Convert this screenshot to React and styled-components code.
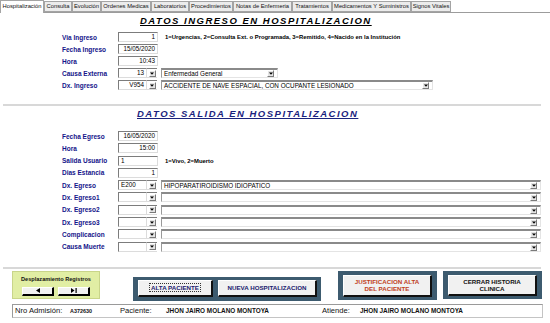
import React from "react";
import styled, { createGlobalStyle } from "styled-components";

const GlobalStyle = createGlobalStyle`
  html, body { margin: 0; padding: 0; background: #fff; }
  body { font-family: "Liberation Sans", Arial, sans-serif; }
`;

const Page = styled.div`
  width: 550px;
  height: 323px;
  overflow: hidden;
  display: flex;
  flex-direction: column;
  background: #fff;
`;

const TabBar = styled.div`
  display: flex;
  align-items: flex-end;
  height: 13px;
  box-sizing: border-box;
  border-bottom: 1px solid #9c9c9c;
`;

const Tab = styled.div`
  flex: none;
  width: ${(p) => p.$w}px;
  height: ${(p) => (p.$active ? 13 : 11)}px;
  margin-bottom: ${(p) => (p.$active ? -1 : 0)}px;
  box-sizing: border-box;
  border: 1px solid #a4a4a4;
  border-bottom: ${(p) => (p.$active ? "none" : "1px solid #a4a4a4")};
  background: ${(p) => (p.$active ? "#fff" : "#ececec")};
  font-size: 5.8px;
  line-height: ${(p) => (p.$active ? 11 : 9)}px;
  text-align: center;
  white-space: nowrap;
  overflow: hidden;
  color: #111;
`;

const Title = styled.div`
  margin-top: 2px;
  padding-left: ${(p) => p.$left}px;
  height: 12px;
  font-size: 9.5px;
  line-height: 12px;
  font-weight: bold;
  font-style: italic;
  letter-spacing: ${(p) => p.$ls}px;
  color: ${(p) => p.$color};
  white-space: nowrap;
  span { text-decoration: underline; text-decoration-thickness: 1.3px; }
`;

const Form = styled.div`
  display: flex;
  flex-direction: column;
  gap: ${(p) => p.$gap}px;
  margin-top: ${(p) => p.$mt}px;
  padding-left: 62px;
`;

const Row = styled.div`
  display: flex;
  align-items: center;
  height: 10px;
`;

const Label = styled.div`
  flex: none;
  width: 56px;
  font-size: 6.5px;
  font-weight: bold;
  color: #14148a;
  white-space: nowrap;
`;

const TextBox = styled.div`
  flex: none;
  width: ${(p) => p.$w}px;
  height: 10px;
  box-sizing: border-box;
  border-top: 1px solid #7c7c7c;
  border-left: 1px solid #7c7c7c;
  border-right: 1px solid #dcdcdc;
  border-bottom: 1px solid #dcdcdc;
  background: #fff;
  padding: 0 2px;
  font-size: 6.3px;
  line-height: 8px;
  text-align: ${(p) => p.$align || "right"};
  color: #000;
  white-space: nowrap;
`;

const DropBtn = styled.div`
  flex: none;
  width: 10px;
  height: 10px;
  box-sizing: border-box;
  display: flex;
  align-items: center;
  justify-content: center;
  background: #fff;
  border-top: 1px solid #7c7c7c;
  border-bottom: 1px solid #dcdcdc;
  span {
    width: 7px;
    height: 7px;
    box-sizing: border-box;
    background: #e4e4e4;
    border: 1px solid;
    border-color: #fff #7a7a7a #7a7a7a #fff;
    display: flex;
    align-items: center;
    justify-content: center;
  }
`;

const WideSelect = styled.div`
  flex: none;
  margin-left: 4px;
  width: ${(p) => p.$w}px;
  height: 10px;
  box-sizing: border-box;
  display: flex;
  align-items: center;
  justify-content: space-between;
  border-top: 2px solid #8a8a8a;
  border-left: 1px solid #9a9a9a;
  border-right: 1px solid #e4e4e4;
  border-bottom: 1px solid #e4e4e4;
  background: #fff;
  padding: 0 3px 0 2px;
  font-size: 6.3px;
  color: #000;
  white-space: nowrap;
`;

const ArrowBox = styled.span`
  flex: none;
  width: 7px;
  height: 7px;
  box-sizing: border-box;
  background: #e4e4e4;
  border: 1px solid;
  border-color: #fff #7a7a7a #7a7a7a #fff;
  display: flex;
  align-items: center;
  justify-content: center;
`;

const Info = styled.div`
  margin-left: 7px;
  font-size: 5.9px;
  font-weight: bold;
  color: #000;
  white-space: nowrap;
`;

const Separator = styled.div`
  flex: none;
  margin-top: ${(p) => p.$mt}px;
  margin-left: 3px;
  width: 538px;
  height: 2px;
  background: #d8d8d8;
`;

const BottomBar = styled.div`
  display: flex;
  align-items: flex-start;
  margin-top: 2px;
  height: 30px;
`;

const NavBox = styled.div`
  flex: none;
  margin-left: 12px;
  width: 88px;
  height: 28px;
  box-sizing: border-box;
  background: #e1eea4;
  border: 1px solid #c9d58a;
  display: flex;
  flex-direction: column;
  align-items: center;
`;

const NavTitle = styled.div`
  margin-top: 4px;
  font-size: 5.6px;
  font-weight: bold;
  color: #111;
  white-space: nowrap;
`;

const NavButtons = styled.div`
  display: flex;
  gap: 4px;
  margin-top: 5px;
`;

const NavButton = styled.div`
  width: 32px;
  height: 9px;
  box-sizing: border-box;
  background: #f2f2f2;
  border-style: solid;
  border-width: 1px 2px 2px 1px;
  border-color: #fff #000 #000 #fff;
  display: flex;
  align-items: center;
  justify-content: center;
`;

const Frame = styled.div`
  flex: none;
  margin-left: ${(p) => p.$ml}px;
  margin-top: ${(p) => p.$mt}px;
  width: ${(p) => p.$w}px;
  height: ${(p) => p.$h}px;
  box-sizing: border-box;
  background: #3d5b6f;
  padding: ${(p) => p.$pad};
  display: flex;
  gap: 5px;
`;

const ActionButton = styled.div`
  flex: ${(p) => (p.$w ? "none" : "1")};
  width: ${(p) => (p.$w ? `${p.$w}px` : "auto")};
  box-sizing: border-box;
  background: #f1f1f1;
  border-style: solid;
  border-width: 1px 2px 2px 1px;
  border-color: #fff #111 #111 #fff;
  display: flex;
  align-items: center;
  justify-content: center;
  text-align: center;
  font-size: 6.2px;
  line-height: 7px;
  font-weight: bold;
  color: ${(p) => p.$color || "#1a1a6e"};
  span.focus {
    border: 1px dotted #333;
    padding: 0 1px;
  }
`;

const StatusBar = styled.div`
  flex: none;
  margin-top: 3px;
  margin-left: 12px;
  width: 531px;
  height: 14px;
  box-sizing: border-box;
  border: 1px solid #c4c4c4;
  border-top-color: #9a9a9a;
  border-left-color: #9a9a9a;
  display: grid;
  grid-template-columns: 55px 50px 46px 156px 38px auto;
  align-items: center;
  padding-left: 2px;
  white-space: nowrap;
`;

const StatusLabel = styled.span`
  font-size: 7.6px;
  color: #111;
`;

const StatusValue = styled.span`
  font-size: ${(p) => (p.$small ? 5.4 : 6.4)}px;
  font-weight: bold;
  color: #111;
`;

const Tri = ({ size = 3 }) => (
  <svg width={size + 1} height={size} viewBox="0 0 4 3">
    <path d="M0 0.5 L4 0.5 L2 2.8 Z" fill="#000" />
  </svg>
);

const tabs = [
  ["Hospitalización", 44],
  ["Consulta", 28],
  ["Evolución", 29],
  ["Ordenes Medicas", 50],
  ["Laboratorios", 38],
  ["Procedimientos", 44],
  ["Notas de Enfermeria", 59],
  ["Tratamientos", 40],
  ["Medicamentos Y Suministros", 79],
  ["Signos Vitales", 40],
];

const Combo = ({ code, text, w, codeAlign }) => (
  <>
    <TextBox $w={29} $align={codeAlign}>
      {code}
    </TextBox>
    <DropBtn>
      <span>
        <Tri />
      </span>
    </DropBtn>
    <WideSelect $w={w}>
      <span>{text}</span>
      <ArrowBox>
        <Tri />
      </ArrowBox>
    </WideSelect>
  </>
);

export default function App() {
  return (
    <>
      <GlobalStyle />
      <Page>
        <TabBar>
          {tabs.map(([t, w], i) => (
            <Tab key={t} $w={w} $active={i === 0}>
              {t}
            </Tab>
          ))}
        </TabBar>

        <Title $left={140} $ls={1.5} $color="#000">
          <span>DATOS INGRESO EN HOSPITALIZACION</span>
        </Title>

        <Form $gap={2} $mt={5}>
          <Row>
            <Label>Via Ingreso</Label>
            <TextBox $w={40}>1</TextBox>
            <Info>
              1=Urgencias, 2=Consulta Ext. o Programada, 3=Remitido, 4=Nacido en la Institución
            </Info>
          </Row>
          <Row>
            <Label>Fecha Ingreso</Label>
            <TextBox $w={40}>15/05/2020</TextBox>
          </Row>
          <Row>
            <Label>Hora</Label>
            <TextBox $w={40}>10:43</TextBox>
          </Row>
          <Row>
            <Label>Causa Externa</Label>
            <Combo code="13" text="Enfermedad General" w={117} />
          </Row>
          <Row>
            <Label>Dx. Ingreso</Label>
            <Combo
              code="V954"
              text="ACCIDENTE DE NAVE ESPACIAL, CON OCUPANTE LESIONADO"
              w={272}
            />
          </Row>
        </Form>

        <Separator $mt={14} />

        <Title $left={137} $ls={1.5} $color="#1a237e">
          <span>DATOS SALIDA EN HOSPITALIZACION</span>
        </Title>

        <Form $gap={2.3} $mt={11}>
          <Row>
            <Label>Fecha Egreso</Label>
            <TextBox $w={40}>16/05/2020</TextBox>
          </Row>
          <Row>
            <Label>Hora</Label>
            <TextBox $w={40}>15:00</TextBox>
          </Row>
          <Row>
            <Label>Salida Usuario</Label>
            <TextBox $w={40} $align="left">
              1
            </TextBox>
            <Info>1=Vivo, 2=Muerto</Info>
          </Row>
          <Row>
            <Label>Dias Estancia</Label>
            <TextBox $w={40}>1</TextBox>
          </Row>
          <Row>
            <Label>Dx. Egreso</Label>
            <Combo code="E200" codeAlign="left" text="HIPOPARATIROIDISMO IDIOPATICO" w={380} />
          </Row>
          {["Dx. Egreso1", "Dx. Egreso2", "Dx. Egreso3", "Complicacion", "Causa Muerte"].map(
            (l) => (
              <Row key={l}>
                <Label>{l}</Label>
                <Combo code="" text="" w={380} />
              </Row>
            )
          )}
        </Form>

        <Separator $mt={15} />

        <BottomBar>
          <NavBox>
            <NavTitle>Desplazamiento Registros</NavTitle>
            <NavButtons>
              <NavButton>
                <svg width="4" height="5" viewBox="0 0 4 5">
                  <path d="M4 0 L0 2.5 L4 5 Z" fill="#000" />
                </svg>
              </NavButton>
              <NavButton>
                <svg width="6" height="5" viewBox="0 0 6 5">
                  <path d="M0 0 L3.5 2.5 L0 5 Z" fill="#000" />
                  <rect x="4.5" y="0" width="1.2" height="5" fill="#000" />
                </svg>
              </NavButton>
            </NavButtons>
          </NavBox>

          <Frame $ml={33} $mt={6} $w={188} $h={24} $pad="3px 4px 4px 5px">
            <ActionButton $w={75}>
              <span className="focus">ALTA PACIENTE</span>
            </ActionButton>
            <ActionButton>NUEVA HOSPITALIZACION</ActionButton>
          </Frame>

          <Frame $ml={17} $mt={0} $w={99} $h={29} $pad="4px 5px 3px 5px">
            <ActionButton $color="#c0401a">
              JUSTIFICACION ALTA
              <br />
              DEL PACIENTE
            </ActionButton>
          </Frame>

          <Frame $ml={6} $mt={0} $w={99} $h={28} $pad="4px 5px 3px 5px">
            <ActionButton $color="#111">
              CERRAR HISTORIA
              <br />
              CLINICA
            </ActionButton>
          </Frame>
        </BottomBar>

        <StatusBar>
          <StatusLabel>Nro Admisión:</StatusLabel>
          <StatusValue $small>A372630</StatusValue>
          <StatusLabel>Paciente:</StatusLabel>
          <StatusValue>JHON JAIRO MOLANO MONTOYA</StatusValue>
          <StatusLabel>Atiende:</StatusLabel>
          <StatusValue>JHON JAIRO MOLANO MONTOYA</StatusValue>
        </StatusBar>
      </Page>
    </>
  );
}
